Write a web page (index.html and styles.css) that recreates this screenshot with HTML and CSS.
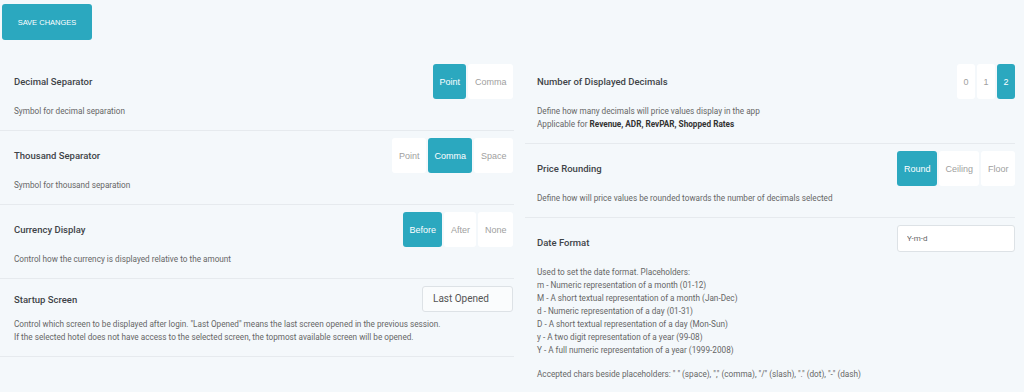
FILE: index.html
```html
<!DOCTYPE html>
<html lang="en">
<head>
    <meta charset="UTF-8">
    <meta name="viewport" content="width=device-width, initial-scale=1.0">
    <title>Settings</title>
    <link rel="stylesheet" href="styles.css">
</head>
<body>
<div class="toolbar">
    <button class="btn-save">SAVE CHANGES</button>
</div>

<div class="settings">
    <div class="column left">
        <div class="setting">
            <div class="setting-head">
                <span class="setting-title">Decimal Separator</span>
                <div class="toggle">
                    <button class="active">Point</button>
                    <button>Comma</button>
                </div>
            </div>
            <div class="setting-desc">Symbol for decimal separation</div>
        </div>

        <div class="setting">
            <div class="setting-head">
                <span class="setting-title">Thousand Separator</span>
                <div class="toggle">
                    <button>Point</button>
                    <button class="active">Comma</button>
                    <button>Space</button>
                </div>
            </div>
            <div class="setting-desc">Symbol for thousand separation</div>
        </div>

        <div class="setting">
            <div class="setting-head">
                <span class="setting-title">Currency Display</span>
                <div class="toggle">
                    <button class="active">Before</button>
                    <button>After</button>
                    <button>None</button>
                </div>
            </div>
            <div class="setting-desc">Control how the currency is displayed relative to the amount</div>
        </div>

        <div class="setting">
            <div class="setting-head compact">
                <span class="setting-title">Startup Screen</span>
                <div class="select">Last Opened</div>
            </div>
            <div class="setting-desc">
                Control which screen to be displayed after login. "Last Opened" means the last screen opened in the previous session.<br>
                If the selected hotel does not have access to the selected screen, the topmost available screen will be opened.
            </div>
        </div>
    </div>

    <div class="column right">
        <div class="setting">
            <div class="setting-head">
                <span class="setting-title">Number of Displayed Decimals</span>
                <div class="toggle">
                    <button>0</button>
                    <button>1</button>
                    <button class="active">2</button>
                </div>
            </div>
            <div class="setting-desc">
                Define how many decimals will price values display in the app<br>
                Applicable for <b>Revenue, ADR, RevPAR, Shopped Rates</b>
            </div>
        </div>

        <div class="setting">
            <div class="setting-head">
                <span class="setting-title">Price Rounding</span>
                <div class="toggle">
                    <button class="active">Round</button>
                    <button>Ceiling</button>
                    <button>Floor</button>
                </div>
            </div>
            <div class="setting-desc">Define how will price values be rounded towards the number of decimals selected</div>
        </div>

        <div class="setting">
            <div class="setting-head top">
                <span class="setting-title">Date Format</span>
                <input type="text" class="text-input" value="Y-m-d">
            </div>
            <div class="setting-desc">
                Used to set the date format. Placeholders:<br>
                m - Numeric representation of a month (01-12)<br>
                M - A short textual representation of a month (Jan-Dec)<br>
                d - Numeric representation of a day (01-31)<br>
                D - A short textual representation of a day (Mon-Sun)<br>
                y - A two digit representation of a year (99-08)<br>
                Y - A full numeric representation of a year (1999-2008)
                <p class="note">Accepted chars beside placeholders: " " (space), "," (comma), "/" (slash), "." (dot), "-" (dash)</p>
            </div>
        </div>
    </div>
</div>
</body>
</html>
```

FILE: styles.css
```css
body {
    margin: 0;
    background-color: #f4f8fb;
    font-family: Roboto, "Noto Sans", sans-serif;
    color: #444;
}

.toolbar {
    padding: 4px 2px 17px;
}

.btn-save {
    width: 90px;
    height: 36px;
    border: none;
    border-radius: 3px;
    background-color: #2ba8bf;
    color: #fff;
    font-family: "Liberation Sans", Arial, sans-serif;
    font-size: 7.5px;
    cursor: pointer;
}

.settings {
    display: grid;
    grid-template-columns: 514px 1fr;
    column-gap: 11px;
    padding-right: 9px;
    align-items: start;
}

.setting {
    padding: 7px 1px 12px 14px;
    border-bottom: 1px solid #e6eaee;
}

.right .setting {
    padding-left: 12px;
    padding-right: 0;
}

.setting-head {
    display: flex;
    justify-content: space-between;
    align-items: center;
    min-height: 35px;
}

.setting-head.compact {
    min-height: 0;
}

.setting-head.top {
    align-items: flex-start;
}

.setting-head.top .setting-title {
    line-height: 35px;
}

.setting-title {
    font-size: 9.5px;
    font-weight: 500;
    color: #3f4448;
}

.setting-desc {
    margin-top: 6px;
    font-size: 8.2px;
    line-height: 13px;
    color: #666;
}

.setting-desc b {
    color: #333;
    font-weight: 700;
}

.note {
    margin: 11px 0 0;
}

.toggle {
    display: flex;
    gap: 2px;
}

.toggle button {
    height: 35px;
    padding: 0 6.5px;
    border: none;
    border-radius: 3px;
    background-color: #fff;
    color: #a0a0a0;
    font-family: "Liberation Sans", Arial, sans-serif;
    font-size: 9px;
    cursor: pointer;
}

.toggle button.active {
    background-color: #2ba8bf;
    color: #fff;
}

.select {
    box-sizing: border-box;
    width: 91px;
    height: 26px;
    padding: 0 10px;
    border: 1px solid #dde2e6;
    border-radius: 3px;
    background-color: #fafcfd;
    font-size: 10px;
    line-height: 24px;
    color: #555;
}

.text-input {
    box-sizing: border-box;
    width: 118px;
    height: 27px;
    padding: 0 9px;
    border: 1px solid #dde2e6;
    border-radius: 3px;
    background-color: #fff;
    font-family: Roboto, sans-serif;
    font-size: 8px;
    color: #666;
}
```
